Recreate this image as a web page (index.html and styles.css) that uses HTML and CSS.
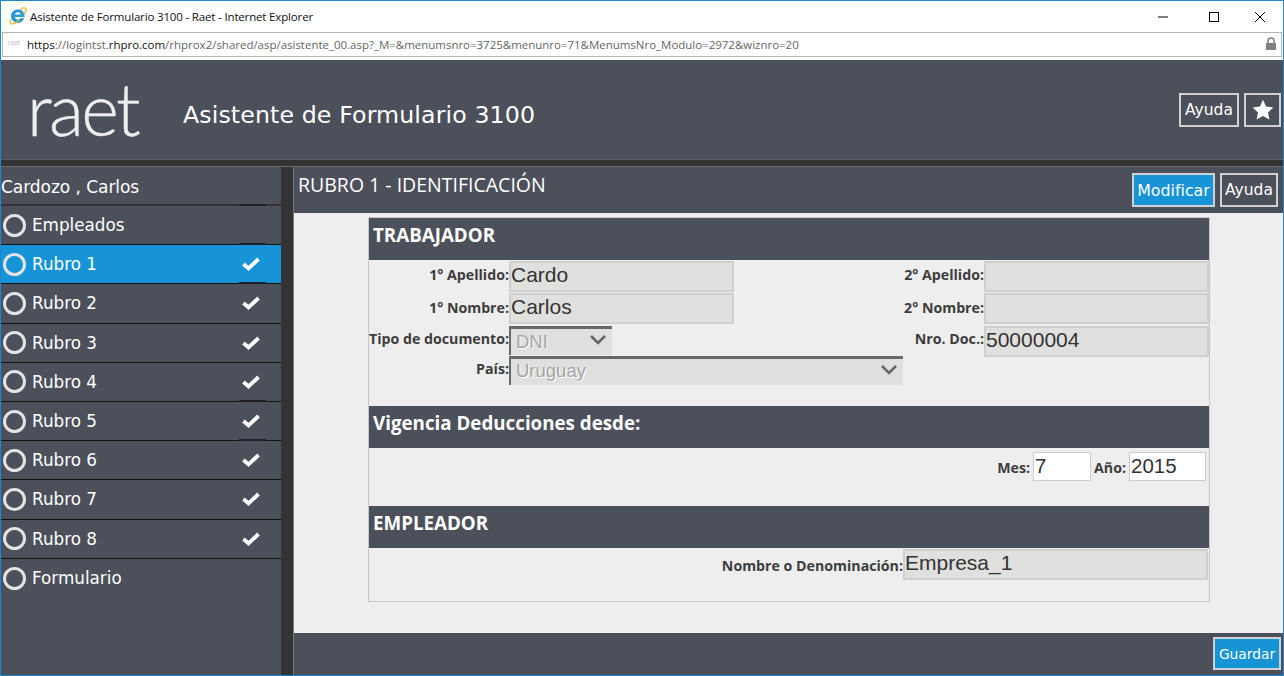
FILE: index.html
```html
<!DOCTYPE html>
<html lang="es">
<head>
<meta charset="utf-8">
<title>Asistente de Formulario 3100 - Raet - Internet Explorer</title>
<link rel="stylesheet" href="styles.css">
</head>
<body>
<div class="window">
  <div class="titlebar">
    <svg class="ie-icon" viewBox="0 0 18 18" width="18" height="18" aria-hidden="true">
      <path d="M8.800 2.200a6.900 6.900 0 1 0 6.500 9.100h-3.800a3.100 3.100 0 0 1-5.600-1.300h9.700c.4-4.400-2.600-7.800-6.800-7.800zM5.900 7.600a3 3 0 0 1 5.800 0z" fill="#2a9bd8"/>
      <path d="M1.800 12C.4 15 1 16.900 3 16.900c1.700 0 4.400-1.500 7-4M11.400 1.900c3-1.400 5.400-1.400 5.700.3.200 1.300-.6 3.200-2.100 5.100" fill="none" stroke="#f2b632" stroke-width="1.400"/>
    </svg>
    <span class="title-text">Asistente de Formulario 3100 - Raet - Internet Explorer</span>
    <div class="win-controls">
      <svg viewBox="0 0 46 30" width="46" height="30" aria-hidden="true"><path d="M13 15h10" stroke="#000" stroke-width="1"/></svg>
      <svg viewBox="0 0 46 30" width="46" height="30" aria-hidden="true"><rect x="18.500" y="10.500" width="9" height="9" fill="none" stroke="#000"/></svg>
      <svg viewBox="0 0 46 30" width="46" height="30" aria-hidden="true"><path d="M18 10l10 10M28 10l-10 10" stroke="#000" fill="none"/></svg>
    </div>
  </div>
  <div class="addressbar">
    <span class="favicon">raet</span>
    <span class="url"><b>https</b>://logintst.<b>rhpro.com</b>/rhprox2/shared/asp/asistente_00.asp?_M=&amp;menumsnro=3725&amp;menunro=71&amp;MenumsNro_Modulo=2972&amp;wiznro=20</span>
    <svg class="lock" viewBox="0 0 12 14" width="12" height="14" aria-hidden="true"><path d="M3 6V4a3 3 0 0 1 6 0v2" fill="none" stroke="#808080" stroke-width="1.500"/><rect x="1" y="6" width="10" height="7" fill="#808080"/></svg>
  </div>

  <header class="app-header">
    <div class="logo">raet</div>
    <h1 class="app-title">Asistente de Formulario 3100</h1>
    <div class="header-actions">
      <button class="btn btn-help">Ayuda</button>
      <button class="btn btn-star" aria-label="Favorito">
        <svg viewBox="0 0 24 24" width="24" height="24" aria-hidden="true"><path d="M12 1.800l3.100 6.700 7.300.9-5.400 5 1.400 7.200-6.400-3.600-6.400 3.600 1.400-7.200-5.400-5 7.300-.9z" fill="#fff"/></svg>
      </button>
    </div>
  </header>
  <div class="divider"></div>

  <div class="workspace">
    <nav class="sidebar">
      <div class="person">Cardozo , Carlos</div>
      <div class="step mark"><span class="ring"></span><span>Empleados</span></div>
      <div class="step active mark"><span class="ring"></span><span>Rubro 1</span><svg class="tick" viewBox="0 0 20 16" aria-hidden="true"><path d="M2.500 8l5 4.500L17.500 3" fill="none" stroke="#fff" stroke-width="3.800"/></svg></div>
      <div class="step mark"><span class="ring"></span><span>Rubro 2</span><svg class="tick" viewBox="0 0 20 16" aria-hidden="true"><path d="M2.500 8l5 4.500L17.500 3" fill="none" stroke="#fff" stroke-width="3.800"/></svg></div>
      <div class="step"><span class="ring"></span><span>Rubro 3</span><svg class="tick" viewBox="0 0 20 16" aria-hidden="true"><path d="M2.500 8l5 4.500L17.500 3" fill="none" stroke="#fff" stroke-width="3.800"/></svg></div>
      <div class="step"><span class="ring"></span><span>Rubro 4</span><svg class="tick" viewBox="0 0 20 16" aria-hidden="true"><path d="M2.500 8l5 4.500L17.500 3" fill="none" stroke="#fff" stroke-width="3.800"/></svg></div>
      <div class="step mark"><span class="ring"></span><span>Rubro 5</span><svg class="tick" viewBox="0 0 20 16" aria-hidden="true"><path d="M2.500 8l5 4.500L17.500 3" fill="none" stroke="#fff" stroke-width="3.800"/></svg></div>
      <div class="step mark"><span class="ring"></span><span>Rubro 6</span><svg class="tick" viewBox="0 0 20 16" aria-hidden="true"><path d="M2.500 8l5 4.500L17.500 3" fill="none" stroke="#fff" stroke-width="3.800"/></svg></div>
      <div class="step"><span class="ring"></span><span>Rubro 7</span><svg class="tick" viewBox="0 0 20 16" aria-hidden="true"><path d="M2.500 8l5 4.500L17.500 3" fill="none" stroke="#fff" stroke-width="3.800"/></svg></div>
      <div class="step"><span class="ring"></span><span>Rubro 8</span><svg class="tick" viewBox="0 0 20 16" aria-hidden="true"><path d="M2.500 8l5 4.500L17.500 3" fill="none" stroke="#fff" stroke-width="3.800"/></svg></div>
      <div class="step last"><span class="ring"></span><span>Formulario</span></div>
    </nav>
    <div class="splitter"></div>
    <main class="content">
      <div class="toolbar">
        <h2 class="section-title">RUBRO 1 - IDENTIFICACIÓN</h2>
        <div class="toolbar-actions">
          <button class="btn btn-primary">Modificar</button>
          <button class="btn btn-small">Ayuda</button>
        </div>
      </div>
      <div class="stage">
        <div class="form-box">
          <h3 class="band">TRABAJADOR</h3>
          <div class="grid-person">
            <label class="lbl">1° Apellido:</label><div class="field">Cardo</div>
            <label class="lbl">2° Apellido:</label><div class="field"></div>
            <label class="lbl">1° Nombre:</label><div class="field">Carlos</div>
            <label class="lbl">2° Nombre:</label><div class="field"></div>
            <label class="lbl">Tipo de documento:</label>
            <div class="select select-doc"><span>DNI</span><svg class="chev" viewBox="0 0 18 12" width="18" height="12" aria-hidden="true"><path d="M2 2l7 7 7-7" fill="none" stroke="#666" stroke-width="2.600"/></svg></div>
            <label class="lbl">Nro. Doc.:</label><div class="field">50000004</div>
            <label class="lbl">País:</label>
            <div class="select select-country"><span>Uruguay</span><svg class="chev" viewBox="0 0 18 12" width="18" height="12" aria-hidden="true"><path d="M2 2l7 7 7-7" fill="none" stroke="#666" stroke-width="2.600"/></svg></div>
          </div>
          <h3 class="band band-vig">Vigencia Deducciones desde:</h3>
          <div class="row-date">
            <label class="lbl">Mes:</label><div class="field field-white f-mes">7</div>
            <label class="lbl">Año:</label><div class="field field-white f-anio">2015</div>
          </div>
          <h3 class="band band-emp">EMPLEADOR</h3>
          <div class="row-emp">
            <label class="lbl">Nombre o Denominación:</label><div class="field f-emp">Empresa_1</div>
          </div>
        </div>
      </div>
      <div class="footer-bar"><button class="btn btn-primary btn-save">Guardar</button></div>
    </main>
  </div>
</div>
</body>
</html>
```
FILE: styles.css
```css
* { box-sizing: border-box; }
html, body { margin: 0; height: 100%; overflow: hidden; }
body { font-family: "DejaVu Sans", sans-serif; background: #fff; }
.window {
  width: 1284px; height: 676px; display: flex; flex-direction: column;
  border: 1px solid #1b86d4; background: #4c505b;
}
.titlebar {
  height: 31px; flex: none; background: #fff; display: flex; align-items: center;
  padding-left: 8px; font: 11.500px "Open Sans", sans-serif; color: #111;
}
.ie-icon { flex: none; margin-right: 3px; margin-top: -1px; }
.title-text { letter-spacing: -0.16px; margin-top: -1px; }
.win-controls { margin-left: auto; display: flex; height: 30px; }
.addressbar {
  height: 28px; flex: none; background: #fff; display: flex; align-items: flex-start;
  padding: 0 2px 0 1px; position: relative;
}
.favicon {
  width: 16px; margin: 0 0 0 6px; padding-top: 7px; font: 7px "Liberation Sans", sans-serif; color: #c9b9c4; flex: none;
}
.url {
  font: 11.480px "Open Sans", sans-serif; color: #666; padding: 5px 0 0 3px; white-space: nowrap;
}
.url b { font-weight: 400; color: #111; }
.addressbar::before {
  content: ""; position: absolute; left: 1px; right: 1px; top: 0; height: 23px; border: 1px solid #b4b4b4; pointer-events: none;
}
.lock { margin-left: auto; margin-top: 5px; margin-right: 4px; }
.app-header {
  height: 100px; flex: none; background: #4c505b; display: flex; align-items: center;
  border-bottom: 1px solid #5e6066; padding-right: 2px;
}
.logo {
  font: 300 72px "Lato", sans-serif; color: #eee; width: 182px; padding-left: 26px; margin-top: -4px; letter-spacing: -2.700px;
  -webkit-text-stroke: 0.4px #eee;
}
.app-title { font: 400 23.700px "DejaVu Sans", sans-serif; color: #fff; margin: 10px 0 0; letter-spacing: 0.1px; }
.header-actions { margin-left: auto; display: flex; gap: 5px; margin-top: 1px; }
.btn {
  font-family: "DejaVu Sans", sans-serif; color: #fff; background: #4c505b; padding: 0;
  border: 2px solid #d0d0d0; display: flex; align-items: center; justify-content: center;
}
.btn-help { width: 60px; height: 34px; font-size: 15.500px; }
.btn-star { width: 37px; height: 34px; }
.divider { height: 7px; flex: none; background: #333; border-bottom: 1px solid #6b6b6b; }
.workspace { flex: 1; display: flex; min-height: 0; }
.sidebar { width: 280px; flex: none; background: #4c505b; color: #fff; }
.person {
  height: 39px; font-size: 17.100px; line-height: 40px; border-bottom: 2px solid #333; letter-spacing: -0.1px; white-space: nowrap;
}
.step {
  height: 39.200px; display: flex; align-items: center; font-size: 16.800px; padding-left: 2px;
  border-bottom: 1px solid #111; gap: 6px; position: relative;
}
.step.mark::before {
  content: ""; position: absolute; left: 238px; top: -2px; width: 27px; height: 2px; background: #1e2026;
}
.step.last { border-bottom: 0; }
.step.active { background: #1793d8; }
.ring {
  width: 23px; height: 23px; border: 3px solid #e4e4e4; border-radius: 50%; flex: none;
}
.tick { width: 20px; height: 16px; margin-left: auto; margin-right: 20px; }
.splitter { width: 13px; flex: none; background: #333; border-right: 1px solid #777; }
.content { flex: 1; display: flex; flex-direction: column; min-width: 0; }
.toolbar {
  height: 46px; flex: none; display: flex; justify-content: space-between; background: #4c505b; padding: 0 5px 0 4px;
}
.section-title { margin: 4px 0 0; font: 400 19.500px "Open Sans", sans-serif; color: #fff; }
.toolbar-actions { display: flex; gap: 5px; margin-top: 6px; }
.btn-primary { background: #1793d8; }
.toolbar-actions .btn { height: 34px; font-size: 15.500px; }
.toolbar-actions .btn-primary { width: 83px; font-size: 15.800px; }
.btn-small { width: 58px; }
.stage { flex: 1; background: #eee; padding: 4px 0 0 74px; min-height: 0; }
.form-box { width: 842px; height: 385px; border: 1px solid #c8c8c8; }
.band {
  margin: 0; height: 42px; background: #4c505b; color: #fff; font: 700 18.750px/34px "Open Sans", sans-serif; padding-left: 4px;
}
.band-vig { margin-top: 21px; }
.band-emp { margin-top: 21px; }
.grid-person {
  display: grid; grid-template-columns: 140px 225px 250px 225px; grid-template-rows: 32px 33px 30px 30px; height: 125px;
}
.lbl {
  font: 700 14.200px "Open Sans", sans-serif; color: #3d3d3d; text-align: right; white-space: nowrap; align-self: center; padding-bottom: 3px;
}
.field {
  background: #e0e0de; border: 2px solid #cfcfcd; font: 21px/24px "Liberation Sans", sans-serif; color: #333; padding: 0; margin-top: 1px; height: 31px;
}
.select {
  background: #e0e0de; border-top: 3px solid #696969; border-left: 2px solid #696969; font: 18.500px/26px "Liberation Sans", sans-serif;
  color: #a5a5a5; text-shadow: 1px 1px 0 #fff; padding-left: 5px; display: flex; align-items: center; justify-content: space-between; margin-top: 1px;
}
.select-doc { width: 103px; padding-right: 5px; height: 29px; }
.select-country { width: 394px; padding-right: 5px; height: 29px; }
.select-country span { margin-top: -2px; }
.chev { flex: none; margin-top: -4px; }
.row-date { height: 37px; display: flex; justify-content: flex-end; align-items: flex-start; padding: 4px 3px 0 0; }
.row-date .lbl { margin-top: 1px; }
.field-white { background: #fff; border-width: 1px; border-color: #ccc; height: 29px; font-size: 20.500px; line-height: 26px; margin: 0 0 0 3px; padding-left: 1px; }
.f-mes { width: 58px; margin-right: 3px; }
.f-anio { width: 77px; }
.row-emp { display: flex; justify-content: flex-end; align-items: flex-start; padding-right: 1px; }
.row-emp .lbl { margin-top: 5px; }
.f-emp { width: 305px; margin-top: 1px; }
.footer-bar { height: 42px; flex: none; background: #4c505b; display: flex; justify-content: flex-end; padding: 4px 2px 0 0; }
.btn-save { width: 68px; height: 33px; font-size: 13.800px; }
```
